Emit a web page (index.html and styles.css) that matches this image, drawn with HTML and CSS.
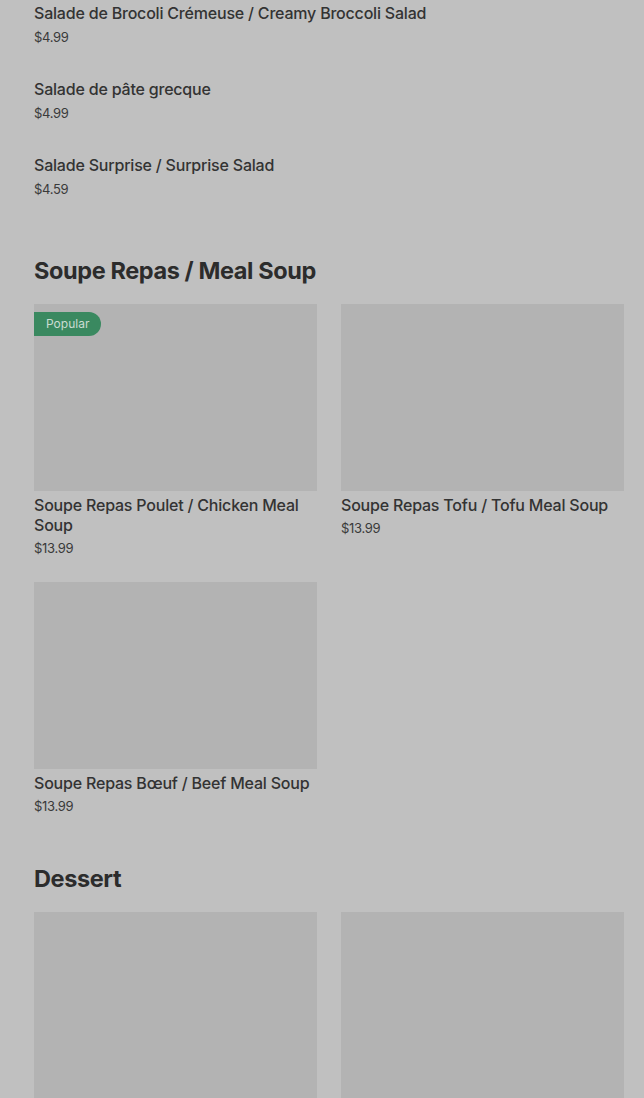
FILE: index.html
```html
<!DOCTYPE html>
<html lang="en">
<head>
    <meta charset="UTF-8">
    <title>Menu</title>
    <link rel="stylesheet" href="styles.css">
</head>
<body>
    <div class="menu">
        <ul class="item-list">
            <li class="item">
                <div class="item-title">Salade de Brocoli Crémeuse / Creamy Broccoli Salad</div>
                <div class="item-price">$4.99</div>
            </li>
            <li class="item">
                <div class="item-title">Salade de pâte grecque</div>
                <div class="item-price">$4.99</div>
            </li>
            <li class="item">
                <div class="item-title">Salade Surprise / Surprise Salad</div>
                <div class="item-price">$4.59</div>
            </li>
        </ul>

        <section class="section">
            <h2 class="section-title">Soupe Repas / Meal Soup</h2>
            <div class="grid">
                <div class="card">
                    <div class="card-image">
                        <span class="badge">Popular</span>
                    </div>
                    <div class="item-title">Soupe Repas Poulet / Chicken Meal Soup</div>
                    <div class="item-price">$13.99</div>
                </div>
                <div class="card">
                    <div class="card-image"></div>
                    <div class="item-title">Soupe Repas Tofu / Tofu Meal Soup</div>
                    <div class="item-price">$13.99</div>
                </div>
                <div class="card">
                    <div class="card-image"></div>
                    <div class="item-title">Soupe Repas Bœuf / Beef Meal Soup</div>
                    <div class="item-price">$13.99</div>
                </div>
            </div>
        </section>

        <section class="section">
            <h2 class="section-title">Dessert</h2>
            <div class="grid">
                <div class="card">
                    <div class="card-image"></div>
                </div>
                <div class="card">
                    <div class="card-image"></div>
                </div>
            </div>
        </section>
    </div>
</body>
</html>
```

FILE: styles.css
```css
* {
    box-sizing: border-box;
    margin: 0;
    padding: 0;
}

body {
    font-family: Inter, 'Noto Sans', sans-serif;
    background: #c0c0c0;
    color: #323232;
    overflow: hidden;
}

.menu {
    padding: 3px 20px 0 34px;
}

.item-list {
    list-style: none;
    display: flex;
    flex-direction: column;
    gap: 32px;
    padding-bottom: 9px;
}

.item-title {
    font-size: 16px;
    font-weight: 500;
    line-height: 20px;
    letter-spacing: -0.2px;
    color: #333;
}

.item-price {
    font-size: 13px;
    line-height: 20px;
    margin-top: 4px;
    letter-spacing: -0.3px;
    color: #3a3a3a;
}

.section {
    padding-top: 49px;
}

.section-title {
    font-size: 23.5px;
    font-weight: 700;
    line-height: 28px;
    letter-spacing: -0.4px;
    color: #2c2c2c;
    margin-bottom: 19px;
}

.grid {
    display: grid;
    grid-template-columns: 1fr 1fr;
    gap: 24px;
}

.card .item-title {
    margin-top: 4px;
}

.card .item-price {
    margin-top: 3px;
}

.card-image {
    position: relative;
    height: 187px;
    background: #b3b3b3;
}

.badge {
    position: absolute;
    top: 8px;
    left: 0;
    height: 24px;
    line-height: 24px;
    padding: 0 12px;
    font-size: 12px;
    color: #cbdcd2;
    background: #3a8960;
    border-radius: 0 12px 12px 0;
}
```
